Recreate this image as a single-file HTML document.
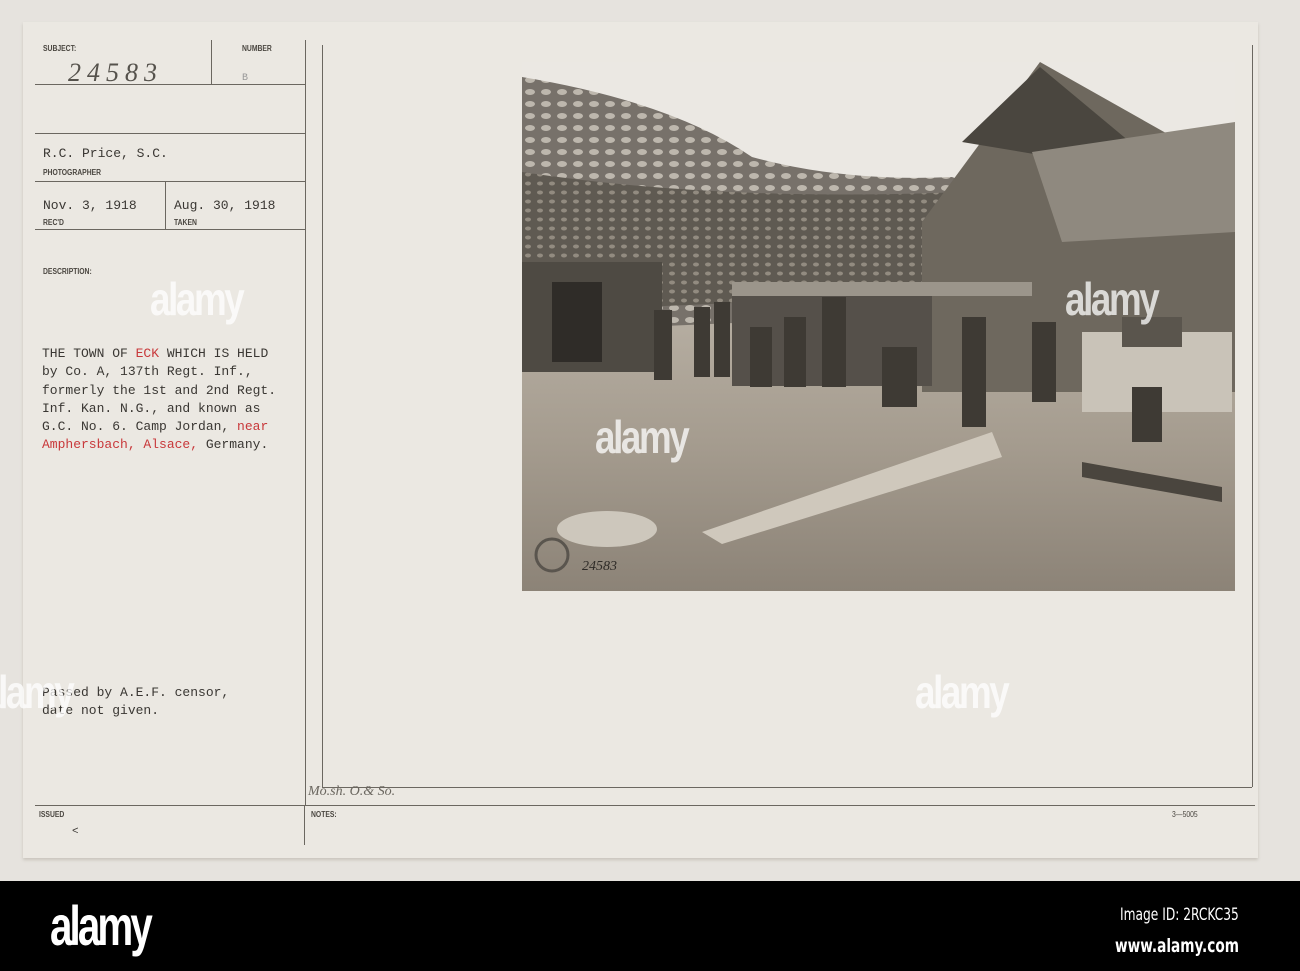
<!DOCTYPE html>
<html><head><meta charset="utf-8"><style>
body{margin:0;width:1300px;height:971px;background:#e6e3de;position:relative;overflow:hidden;font-family:"Liberation Mono",monospace;}
.card{position:absolute;left:23px;top:22px;width:1235px;height:836px;background:#ebe8e2;box-shadow:0 2px 3px #c9c4bc;}
.ln{position:absolute;background:#6b6760;}
.t{position:absolute;font-size:13px;color:#3a3733;white-space:pre;}
.lbl{position:absolute;font-family:"Liberation Sans",sans-serif;font-size:8px;font-weight:bold;color:#4a4640;transform:scaleX(.85);transform-origin:left;}
.r{color:#c8383a;}
.wm{position:absolute;font-family:"Liberation Sans",sans-serif;font-weight:bold;color:rgba(255,255,255,.75);font-size:46px;letter-spacing:-3px;transform:scaleX(.8);transform-origin:left;}
.bar{position:absolute;left:0;top:881px;width:1300px;height:90px;background:#000;}
</style></head><body>
<div class="card"></div>
<div class="ln" style="left:35px;top:84px;width:270px;height:1px"></div>
<div class="ln" style="left:35px;top:133px;width:270px;height:1px"></div>
<div class="ln" style="left:35px;top:181px;width:270px;height:1px"></div>
<div class="ln" style="left:35px;top:229px;width:270px;height:1px"></div>
<div class="ln" style="left:211px;top:40px;width:1px;height:44px"></div>
<div class="ln" style="left:165px;top:182px;width:1px;height:47px"></div>
<div class="ln" style="left:305px;top:40px;width:1px;height:765px"></div>
<div class="ln" style="left:322px;top:45px;width:1px;height:742px"></div>
<div class="ln" style="left:322px;top:787px;width:930px;height:1px"></div>
<div class="ln" style="left:1252px;top:45px;width:1px;height:742px"></div>
<div class="ln" style="left:35px;top:805px;width:1220px;height:1px"></div>
<div class="ln" style="left:304px;top:805px;width:1px;height:40px"></div>
<div class="lbl" style="left:43px;top:44px">SUBJECT:</div>
<div class="lbl" style="left:242px;top:44px">NUMBER</div>
<div class="t" style="left:68px;top:58px;font-family:'Liberation Serif',serif;font-style:italic;font-size:26px;letter-spacing:6px;color:#55524c">24583</div>
<div class="t" style="left:242px;top:73px;font-size:10px;color:#999">B</div>
<div class="t" style="left:43px;top:146px">R.C. Price, S.C.</div>
<div class="lbl" style="left:43px;top:168px">PHOTOGRAPHER</div>
<div class="t" style="left:43px;top:198px">Nov. 3, 1918</div>
<div class="t" style="left:174px;top:198px">Aug. 30, 1918</div>
<div class="lbl" style="left:43px;top:218px">REC'D</div>
<div class="lbl" style="left:174px;top:218px">TAKEN</div>
<div class="lbl" style="left:43px;top:267px">DESCRIPTION:</div>
<div class="t" style="left:42px;top:345px;line-height:18.3px">THE TOWN OF <span class="r">ECK</span> WHICH IS HELD
by Co. A, 137th Regt. Inf.,
formerly the 1st and 2nd Regt.
Inf. Kan. N.G., and known as
G.C. No. 6. Camp Jordan, <span class="r">near</span>
<span class="r">Amphersbach, Alsace,</span> Germany.</div>
<div class="t" style="left:42px;top:684px;line-height:18px">Passed by A.E.F. censor,
date not given.</div>
<div class="t" style="left:308px;top:784px;font-family:'Liberation Serif',serif;font-style:italic;font-size:14px;color:#6a665f">Mo.sh. O.&amp; So.</div>
<div class="lbl" style="left:39px;top:810px">ISSUED</div>
<div class="lbl" style="left:311px;top:810px">NOTES:</div>
<div class="t" style="left:72px;top:826px;font-size:11px">&lt;</div>
<div class="lbl" style="left:1172px;top:810px;font-weight:normal">3—5005</div>
<svg style="position:absolute;left:522px;top:62px" width="713" height="529" viewBox="0 0 713 529">
<defs>
<linearGradient id="g" x1="0" y1="0" x2="0" y2="1">
<stop offset="0" stop-color="#b9b1a5"/><stop offset=".5" stop-color="#a59c8f"/><stop offset="1" stop-color="#8c8377"/></linearGradient>
<pattern id="net" width="16" height="12" patternUnits="userSpaceOnUse"><rect width="16" height="12" fill="#77716a"/><ellipse cx="8" cy="6" rx="5" ry="3" fill="#bdb7ad"/></pattern>
<pattern id="net2" width="12" height="9" patternUnits="userSpaceOnUse"><rect width="12" height="9" fill="#5f5a52"/><ellipse cx="6" cy="4.5" rx="3" ry="2" fill="#928b80"/></pattern>
</defs>
<rect width="713" height="529" fill="#ebe8e3"/>
<rect y="230" width="713" height="299" fill="url(#g)"/>
<path d="M0 15 Q150 40 230 95 Q320 120 430 115 L470 130 L470 250 L0 270Z" fill="url(#net)"/>
<path d="M0 110 Q200 140 440 130 L470 230 L0 250Z" fill="url(#net2)"/>
<path d="M400 160 L518 0 L713 110 L713 330 L400 330Z" fill="#6e685e"/>
<path d="M440 80 L518 5 L620 90 L560 100 Z" fill="#4a463f"/>
<path d="M510 90 L713 60 L713 170 L540 180Z" fill="#8f897f"/>
<rect x="0" y="200" width="140" height="110" fill="#4e4a43"/>
<rect x="30" y="220" width="50" height="80" fill="#2f2c28"/>
<rect x="210" y="220" width="300" height="14" fill="#9b958b"/>
<rect x="210" y="234" width="200" height="90" fill="#55504a"/>
<rect x="560" y="270" width="150" height="80" fill="#c9c3b8"/>
<rect x="600" y="255" width="60" height="30" fill="#5a554d"/>
<g fill="#3e3a34">
<rect x="132" y="248" width="18" height="70"/><rect x="172" y="245" width="16" height="70"/><rect x="192" y="240" width="16" height="75"/>
<rect x="228" y="265" width="22" height="60"/><rect x="262" y="255" width="22" height="70"/><rect x="300" y="235" width="24" height="90"/>
<rect x="360" y="285" width="35" height="60"/><rect x="440" y="255" width="24" height="110"/><rect x="510" y="260" width="24" height="80"/>
<rect x="610" y="325" width="30" height="55"/></g>
<path d="M180 470 L470 370 L480 395 L200 482Z" fill="#cfc8bc"/>
<path d="M560 400 L700 425 L700 440 L560 415Z" fill="#4a453e"/>
<ellipse cx="85" cy="467" rx="50" ry="18" fill="#cdc7bc"/>
<text x="60" y="508" font-family="Liberation Serif" font-style="italic" font-size="14" fill="#2e2b27">24583</text>
<circle cx="30" cy="493" r="16" fill="none" stroke="#5a554e" stroke-width="3"/>
</svg>
<div class="wm" style="left:150px;top:272px">alamy</div>
<div class="wm" style="left:595px;top:410px">alamy</div>
<div class="wm" style="left:915px;top:665px">alamy</div>
<div class="wm" style="left:-20px;top:665px">alamy</div>
<div class="wm" style="left:1065px;top:272px">alamy</div>
<div class="bar"></div>
<div style="position:absolute;left:50px;top:893px;color:#fff;font-family:'Liberation Sans',sans-serif;font-weight:bold;font-size:56px;letter-spacing:-4px;transform:scaleX(.72);transform-origin:left">alamy</div>
<div style="position:absolute;left:1120px;top:905px;color:#fff;font-family:'DejaVu Sans Condensed','Liberation Sans',sans-serif;font-size:17px;transform:scaleX(.8);transform-origin:left;white-space:nowrap">Image ID: 2RCKC35</div>
<div style="position:absolute;left:1115px;top:935px;color:#fff;font-family:'DejaVu Sans Condensed','Liberation Sans',sans-serif;font-size:19px;font-weight:bold;transform:scaleX(.8);transform-origin:left;white-space:nowrap">www.alamy.com</div>
</body></html>
